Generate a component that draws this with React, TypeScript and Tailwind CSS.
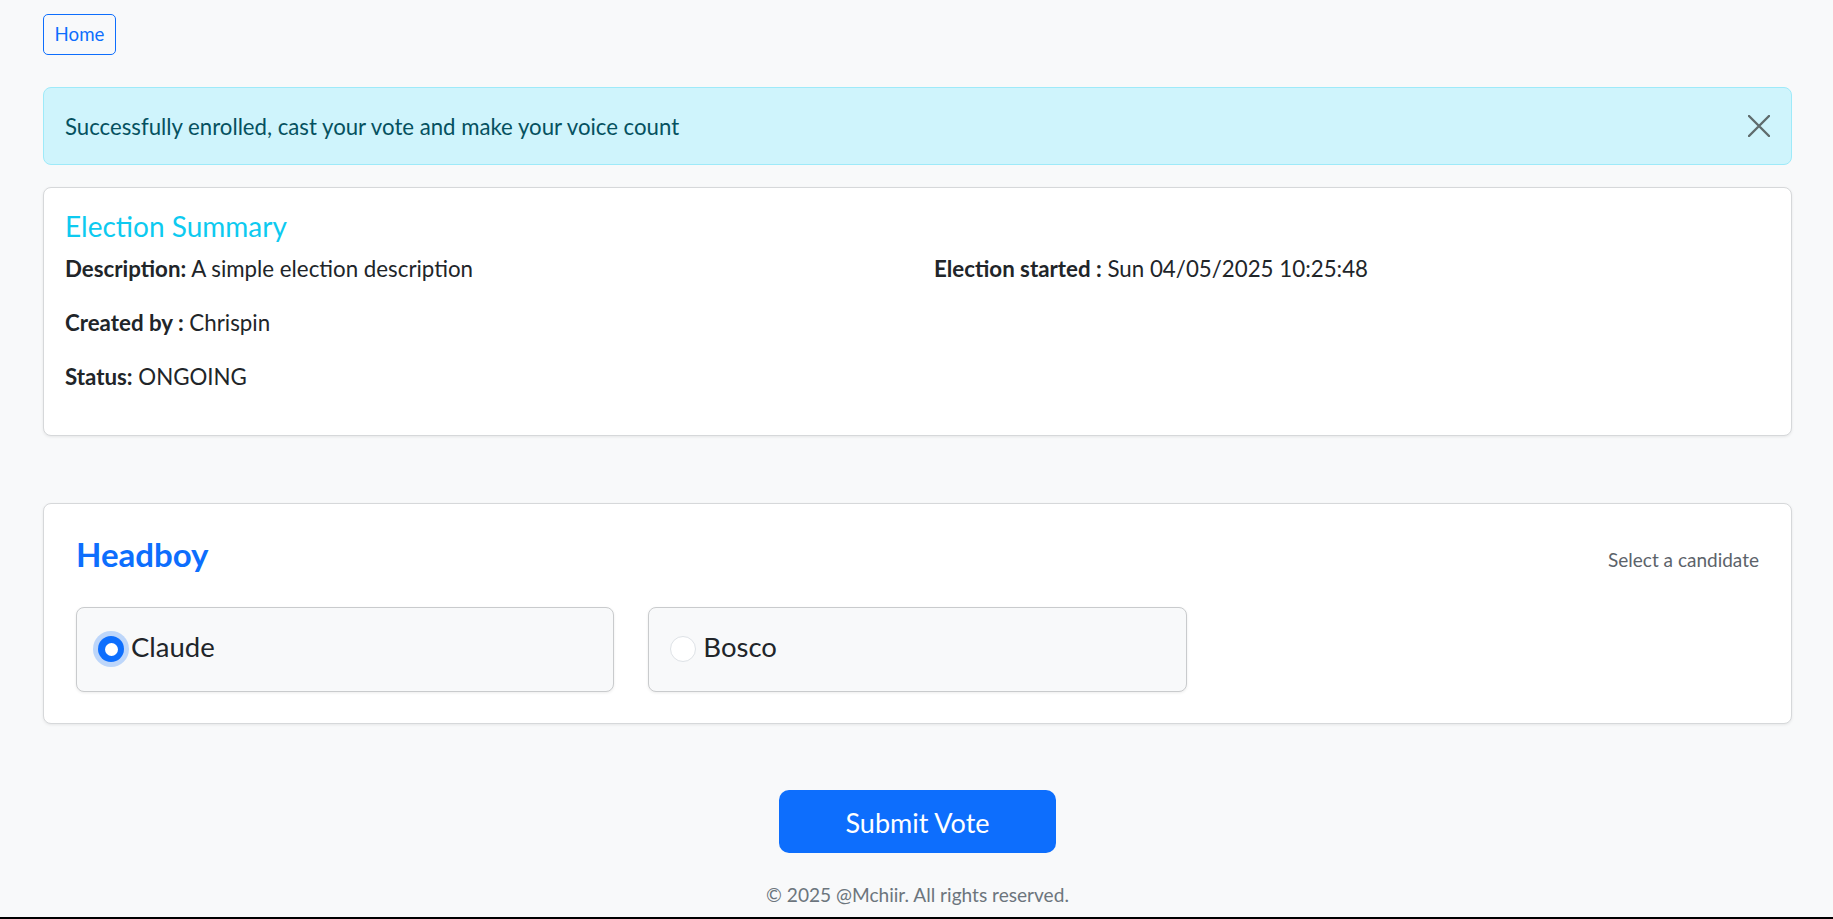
import React from "react";

export default function App() {
  return (
    <div
      className="min-h-screen bg-[#f8f9fa] text-[#212529]"
      style={{ fontFamily: "Lato, 'Noto Sans', sans-serif" }}
    >
      <div className="pl-[43px] pr-[41px] pt-[14px]">
        <button className="flex h-[41px] w-[73px] items-center justify-center rounded-[5px] border border-[#0d6efd] text-[18.7px] text-[#0d6efd]">
          Home
        </button>

        <div className="mt-[32px] flex h-[78px] items-center justify-between rounded-[8px] border border-[#9eeaf9] bg-[#cff4fc] pl-[21px] pr-[21px] pt-[2px] text-[22.2px] text-[#055160]">
          <span>Successfully enrolled, cast your vote and make your voice count</span>
          <svg width="22" height="22" viewBox="0 0 22 22" className="-mt-[2px] shrink-0">
            <path d="M1 1L21 21M21 1L1 21" stroke="#5f6b6d" strokeWidth="2.4" strokeLinecap="round" />
          </svg>
        </div>

        <div className="mt-[22px] rounded-[8px] border border-[#d6d8da] bg-white px-[21px] pt-[22px] pb-[21px] shadow-[0_1px_3px_rgba(0,0,0,0.08)]">
          <h5 className="mb-[11px] text-[28px] leading-[32px] font-normal text-[#0dcaf0]">Election Summary</h5>
          <div className="grid grid-cols-[869px_1fr] text-[22.3px] leading-[32px]">
            <div className="flex flex-col gap-[22px] pb-[21px]">
              <p>
                <span className="font-bold">Description:</span> A simple election description
              </p>
              <p>
                <span className="font-bold">Created by :</span> Chrispin
              </p>
              <p>
                <span className="font-bold">Status:</span> ONGOING
              </p>
            </div>
            <div>
              <p>
                <span className="font-bold">Election started :</span> Sun 04/05/2025 10:25:48
              </p>
            </div>
          </div>
        </div>

        <div className="mt-[67px] rounded-[8px] border border-[#d6d8da] bg-white px-[32px] pt-[32px] pb-[31px] shadow-[0_1px_3px_rgba(0,0,0,0.08)]">
          <div className="mb-[32px] flex items-baseline justify-between">
            <h3 className="text-[33px] leading-[37px] font-bold text-[#0d6efd]">Headboy</h3>
            <span className="text-[19px] text-[#5c636a]">Select a candidate</span>
          </div>
          <div className="grid grid-cols-3 gap-[34px]">
            <label className="flex h-[85px] items-center rounded-[8px] border border-[#c9cbcd] bg-[#f8f9fa] px-[21px] shadow-[0_1px_3px_rgba(0,0,0,0.08)]">
              <span className="flex h-[26px] w-[26px] items-center justify-center rounded-full bg-[#0d6efd] shadow-[0_0_0_5px_rgba(13,110,253,0.25)]">
                <span className="h-[13px] w-[13px] rounded-full bg-white" />
              </span>
              <span className="ml-[7px] pb-[4px] text-[27.5px] leading-[40px]">Claude</span>
            </label>
            <label className="flex h-[85px] items-center rounded-[8px] border border-[#c9cbcd] bg-[#f8f9fa] px-[21px] shadow-[0_1px_3px_rgba(0,0,0,0.08)]">
              <span className="h-[26px] w-[26px] rounded-full border border-[#dee2e6] bg-white" />
              <span className="ml-[7px] pb-[4px] text-[27.5px] leading-[40px]">Bosco</span>
            </label>
            <div />
          </div>
        </div>

        <div className="mt-[66px] flex justify-center">
          <button className="h-[63px] w-[277px] rounded-[10px] bg-[#0d6efd] pt-[4px] text-[27px] text-white">
            Submit Vote
          </button>
        </div>

        <p className="mt-[28px] text-center text-[19.1px] leading-[28px] text-[#6c757d]">
          © 2025 @Mchiir. All rights reserved.
        </p>
      </div>
      <div className="mt-[8px] h-[20px] bg-black" />
    </div>
  );
}
